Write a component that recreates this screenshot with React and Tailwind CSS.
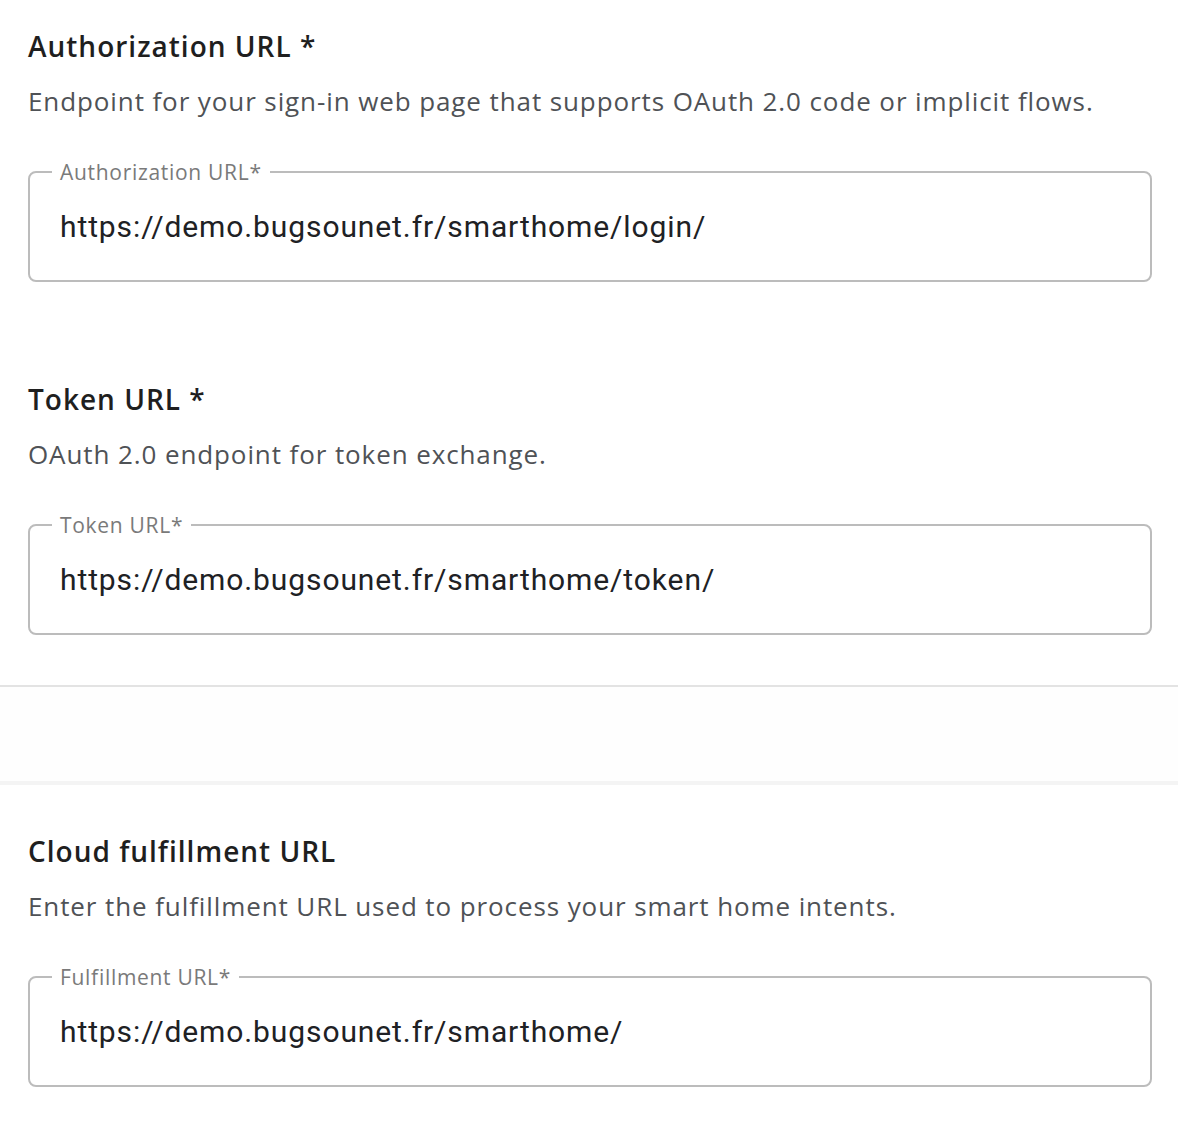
const textFont = { fontFamily: "'Open Sans', 'Noto Sans', sans-serif" };

function UrlField({ label, value }) {
  return (
    <fieldset className="ml-[28px] mr-[26px] h-[122px] rounded-[8px] border-2 border-[#bcbcbc] pl-[22px] pr-6">
      <legend className="px-[8px] text-[21px] leading-[24px] tracking-[0.7px] text-[#7a7a7a]">{label}*</legend>
      <div
        className="pl-[8px] pt-[23px] text-[30px] leading-[40px] tracking-[0.9px] text-[#202124]"
        style={{ fontFamily: "Roboto, sans-serif" }}
      >
        {value}
      </div>
    </fieldset>
  );
}

function Section({ title, required, description, label, value, top }) {
  return (
    <div className={top}>
      <h2 className="px-[28px] text-[28px] font-semibold leading-[36px] tracking-[1px] text-[#1f1f1f]">
        {title}
        {required && " *"}
      </h2>
      <p className="mt-[19px] mb-[41px] px-[28px] text-[26px] leading-[36px] tracking-[0.9px] text-[#4f5256]">
        {description}
      </p>
      <UrlField label={label} value={value} />
    </div>
  );
}

export default function App() {
  return (
    <div className="min-h-[1138px] w-[1178px] bg-white" style={textFont}>
      <Section
        top="pt-[28px]"
        title="Authorization URL"
        required
        description="Endpoint for your sign-in web page that supports OAuth 2.0 code or implicit flows."
        label="Authorization URL"
        value="https://demo.bugsounet.fr/smarthome/login/"
      />
      <Section
        top="pt-[99px]"
        title="Token URL"
        required
        description="OAuth 2.0 endpoint for token exchange."
        label="Token URL"
        value="https://demo.bugsounet.fr/smarthome/token/"
      />
      <div className="mt-[50px] h-[2px] bg-[#e3e3e3]" />
      <div className="h-[94px] bg-[#fefefe]" />
      <div className="h-[4px] bg-[#f4f4f4]" />
      <Section
        top="pt-[48px]"
        title="Cloud fulfillment URL"
        description="Enter the fulfillment URL used to process your smart home intents."
        label="Fulfillment URL"
        value="https://demo.bugsounet.fr/smarthome/"
      />
    </div>
  );
}
